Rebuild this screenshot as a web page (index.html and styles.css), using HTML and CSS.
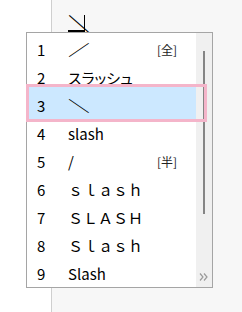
FILE: index.html
```html
<!DOCTYPE html>
<html lang="ja">
<head>
<meta charset="utf-8">
<link rel="stylesheet" href="styles.css">
</head>
<body>
<div class="page">
  <div class="gutter"></div>
  <div class="editor">
    <span class="compose"><span class="ch"><span class="glyph">＼</span></span><span class="caret"></span></span>
  </div>
</div>
<div class="popup">
  <ul class="list">
    <li class="row"><span class="num">1</span><span class="cand"><span class="wide">／</span></span><span class="tag">[全]</span></li>
    <li class="row"><span class="num">2</span><span class="cand kana">スラッシュ</span></li>
    <li class="row selected"><span class="num">3</span><span class="cand"><span class="wide">＼</span></span></li>
    <li class="row"><span class="num">4</span><span class="cand">slash</span></li>
    <li class="row"><span class="num">5</span><span class="cand">/</span><span class="tag">[半]</span></li>
    <li class="row"><span class="num">6</span><span class="cand">ｓｌａｓｈ</span></li>
    <li class="row"><span class="num">7</span><span class="cand">ＳＬＡＳＨ</span></li>
    <li class="row"><span class="num">8</span><span class="cand">Ｓｌａｓｈ</span></li>
    <li class="row"><span class="num">9</span><span class="cand">Slash</span></li>
  </ul>
  <div class="track">
    <div class="thumb"></div>
    <svg class="more" width="9" height="8" viewBox="0 0 9 8"><path d="M1 0.5 L4 4 L1 7.5 M5 0.5 L8 4 L5 7.5" fill="none" stroke="#9a9a9a" stroke-width="1.2"/></svg>
  </div>
  <div class="mark"></div>
</div>
</body>
</html>
```
FILE: styles.css
```css
html, body {
  margin: 0;
  padding: 0;
  height: 100%;
}
body {
  position: relative;
  font-family: "Noto Sans CJK JP", "Noto Sans", sans-serif;
  overflow: hidden;
}
.page {
  display: flex;
  height: 312px;
}
.gutter {
  width: 51px;
  background: #ffffff;
  border-right: 1px solid #cfcfcf;
}
.editor {
  flex: 1;
  background: #f7f7f7;
  padding: 15px 0 0 16px;
}
.compose {
  display: flex;
  align-items: flex-start;
  height: 17px;
}
.ch {
  display: block;
  width: 17px;
  height: 15px;
  border-bottom: 2px solid #000;
  overflow: visible;
}
.glyph {
  display: block;
  font-size: 20px;
  line-height: 15px;
  color: #000;
  transform: translate(0px, 1px) scale(1.25, 1.1);
  transform-origin: left center;
}
.caret {
  display: block;
  width: 1px;
  height: 16px;
  margin-left: -1px;
  background: #000;
}
.popup {
  position: absolute;
  left: 26px;
  top: 32px;
  width: 185px;
  height: 254px;
  border: 1px solid #a5a5a5;
  background: #fff;
  display: flex;
}
.list {
  list-style: none;
  margin: 0;
  padding: 2px 0 0 0;
  width: 169px;
}
.row {
  display: flex;
  align-items: center;
  height: 28px;
  font-size: 15px;
  color: #000;
  padding: 0 19px 0 10px;
}
.row.selected {
  background: #cce8ff;
  box-shadow: 0 -4px 0 #cce8ff;
}
.num {
  width: 31px;
  flex: none;
}
.cand {
  flex: 1;
  white-space: nowrap;
}
.wide {
  display: inline-block;
  transform: scaleX(1.45);
  transform-origin: left center;
}
.kana {
  font-feature-settings: "palt";
}
.tag {
  font-size: 12px;
  color: #222;
}
.track {
  position: relative;
  width: 16px;
  background: #f0f0f0;
}
.thumb {
  position: absolute;
  left: 7px;
  top: 18px;
  width: 2px;
  height: 163px;
  background: #858585;
}
.more {
  position: absolute;
  left: 3px;
  bottom: 6px;
}
.mark {
  position: absolute;
  left: -1px;
  top: 51px;
  width: 181px;
  height: 38px;
  box-sizing: border-box;
  border: 3px solid #f4b5ca;
}
```
